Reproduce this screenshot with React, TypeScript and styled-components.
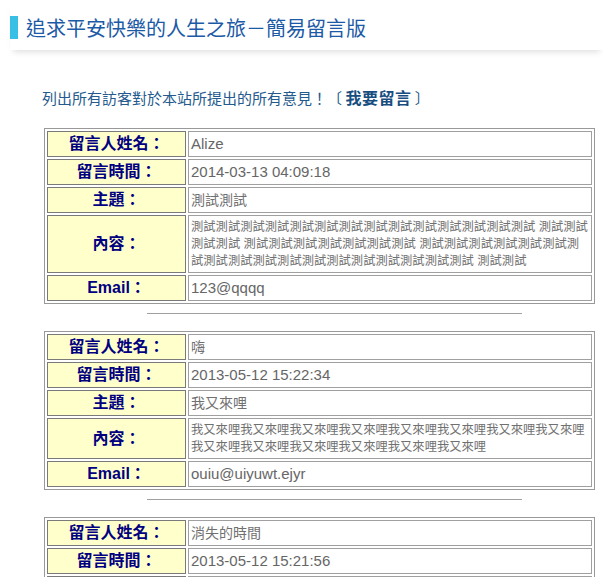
import React, { FC } from 'react';
import styled, { createGlobalStyle } from 'styled-components';

const GlobalStyle = createGlobalStyle`
    body {
        margin: 0;
        background: #fff;
        font-family: 'Liberation Sans', 'Noto Sans CJK TC', sans-serif;
    }
`;

const Header = styled.header`
    display: flex;
    align-items: center;
    gap: 8px;
    margin-left: 10px;
    padding: 16px 0 11px;
    background: #fff;
    box-shadow: 0 5px 6px -3px rgba(0, 0, 0, 0.13);
`;

const TitleBar = styled.span`
    width: 8px;
    height: 23px;
    background: #37bfe6;
`;

const Title = styled.h1`
    margin: 0;
    font-family: 'Noto Sans CJK TC', sans-serif;
    font-weight: normal;
    font-size: 20px;
    line-height: 23px;
    color: #1c5aa6;
`;

const Main = styled.main`
    padding: 37px 0 0 42px;
`;

const Intro = styled.p`
    margin: 0 0 20px;
    font-family: 'Noto Sans CJK TC', sans-serif;
    font-size: 15px;
    line-height: 20px;
    color: #245a8d;
`;

const PostLink = styled.a`
    font-size: 16px;
    font-weight: bold;
    letter-spacing: 0.5px;
    color: #174e7f;
    text-decoration: none;
    cursor: pointer;
`;

const BoardTable = styled.table`
    margin-left: 2px;
    width: 551px;
    border: 1px solid #999;
    border-collapse: separate;
    border-spacing: 2px;
`;

const LabelCell = styled.th`
    box-sizing: border-box;
    width: 139px;
    padding: 2px 3px;
    border: 1px solid #7a7a7a;
    background: #ffffcc;
    color: #000080;
    font-family: 'Liberation Sans', 'Noto Sans CJK TC', sans-serif;
    font-size: 16px;
    font-weight: bold;
    line-height: 20px;
    text-align: center;
    vertical-align: middle;
`;

type Variant = 'text' | 'cjk' | 'long';

const ValueCell = styled.td<{ $variant: Variant }>`
    padding: ${({ $variant }) => ($variant === 'long' ? '3px 1.5px 2px 2px' : '2px 1.5px 2px 2px')};
    border: 1px solid #a0a0a0;
    color: ${({ $variant }) => ($variant === 'text' ? '#666' : '#707070')};
    font-family: 'Liberation Sans', 'Noto Sans CJK TC', sans-serif;
    font-size: ${({ $variant }) => ($variant === 'long' ? '12.3px' : $variant === 'cjk' ? '14px' : '15px')};
    line-height: ${({ $variant }) => ($variant === 'long' ? '17px' : '20px')};
    text-align: left;
    vertical-align: middle;
`;

const Divider = styled.hr`
    margin: 9px 0 17px 105px;
    width: 375px;
    height: 1px;
    border: none;
    background: #a0a0a0;
`;

type Message = {
    name: string;
    time: string;
    subject: string;
    content: string;
    email: string;
};

const t = (n: number) => '測試'.repeat(n);

const messages: Message[] = [
    {
        name: 'Alize',
        time: '2014-03-13 04:09:18',
        subject: '測試測試',
        content: `${t(14)} ${t(4)} ${t(7)} ${t(18)} ${t(2)}`,
        email: '123@qqqq',
    },
    {
        name: '嗨',
        time: '2013-05-12 15:22:34',
        subject: '我又來哩',
        content: '我又來哩'.repeat(14),
        email: 'ouiu@uiyuwt.ejyr',
    },
    {
        name: '消失的時間',
        time: '2013-05-12 15:21:56',
        subject: '時間',
        content: '時間消失了',
        email: 'time@lost',
    },
];

const hasCjk = (s: string) => /[\u3000-\u9fff\uff00-\uffef]/.test(s);

const Row: FC<{ label: string; value: string; long?: boolean }> = ({ label, value, long }) => (
    <tr>
        <LabelCell>{label}</LabelCell>
        <ValueCell $variant={long ? 'long' : hasCjk(value) ? 'cjk' : 'text'}>{value}</ValueCell>
    </tr>
);

const MessageTable: FC<{ message: Message }> = ({ message }) => (
    <BoardTable>
        <tbody>
            <Row label="留言人姓名：" value={message.name} />
            <Row label="留言時間：" value={message.time} />
            <Row label="主題：" value={message.subject} />
            <Row label="內容：" value={message.content} long />
            <Row label="Email：" value={message.email} />
        </tbody>
    </BoardTable>
);

const App: FC = () => {
    return (
        <>
            <GlobalStyle />
            <Header>
                <TitleBar />
                <Title>追求平安快樂的人生之旅－簡易留言版</Title>
            </Header>
            <Main>
                <Intro>
                    列出所有訪客對於本站所提出的所有意見！〔 <PostLink>我要留言</PostLink> 〕
                </Intro>
                {messages.map((m, i) => (
                    <React.Fragment key={m.time}>
                        <MessageTable message={m} />
                        {i < messages.length - 1 && <Divider />}
                    </React.Fragment>
                ))}
            </Main>
        </>
    );
};

export default App;
